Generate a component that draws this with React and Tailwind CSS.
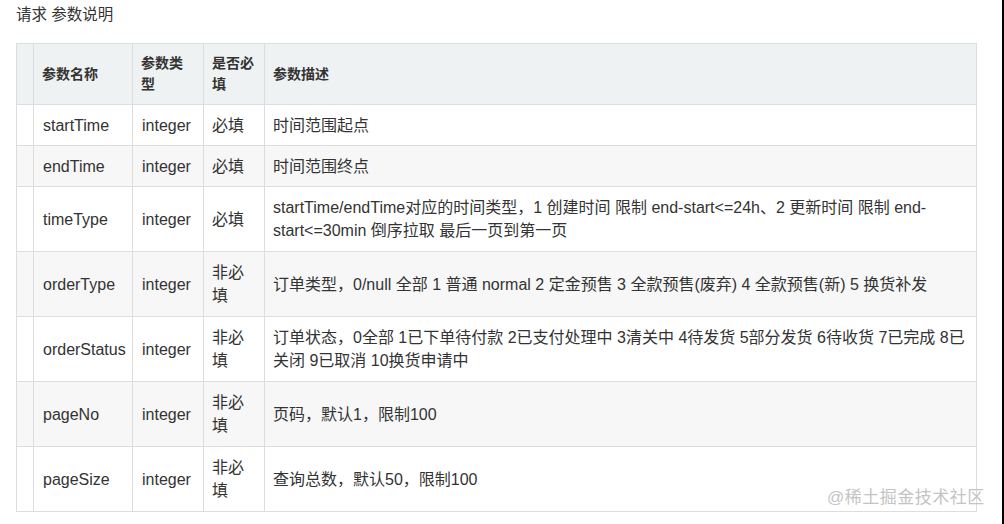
import React from 'react';

const rows = [
  { name: 'startTime', type: 'integer', req: '必填', desc: '时间范围起点' },
  { name: 'endTime', type: 'integer', req: '必填', desc: '时间范围终点' },
  {
    name: 'timeType',
    type: 'integer',
    req: '必填',
    desc: 'startTime/endTime对应的时间类型，1 创建时间 限制 end-start<=24h、2 更新时间 限制 end-start<=30min 倒序拉取 最后一页到第一页',
  },
  {
    name: 'orderType',
    type: 'integer',
    req: '非必填',
    desc: '订单类型，0/null 全部 1 普通 normal 2 定金预售 3 全款预售(废弃) 4 全款预售(新) 5 换货补发',
  },
  {
    name: 'orderStatus',
    type: 'integer',
    req: '非必填',
    desc: '订单状态，0全部 1已下单待付款 2已支付处理中 3清关中 4待发货 5部分发货 6待收货 7已完成 8已关闭 9已取消 10换货申请中',
  },
  { name: 'pageNo', type: 'integer', req: '非必填', desc: '页码，默认1，限制100' },
  { name: 'pageSize', type: 'integer', req: '非必填', desc: '查询总数，默认50，限制100' },
];

const font = { fontFamily: '"Liberation Sans", "Noto Sans CJK SC", sans-serif' };

export default function App() {
  return (
    <div
      className="relative w-[1004px] h-[524px] overflow-hidden bg-white border-r-2 border-black text-[#333]"
      style={font}
    >
      <div className="pl-4 pt-[5px] text-[15.5px] leading-[20px]">请求 参数说明</div>

      <table className="ml-4 mt-[18px] w-[961px] table-fixed border-collapse">
        <colgroup>
          <col className="w-[17px]" />
          <col className="w-[99px]" />
          <col className="w-[71px]" />
          <col className="w-[61px]" />
          <col />
        </colgroup>
        <thead>
          <tr className="bg-[#eff2f2] h-[61px]">
            <th className="border border-[#dddddd]"></th>
            {['参数名称', '参数类型', '是否必填', '参数描述'].map((h) => (
              <th
                key={h}
                className="border border-[#dddddd] pl-[8px] pr-2 text-left align-middle text-[14px] leading-[21px] font-bold text-[#333]"
              >
                {h}
              </th>
            ))}
          </tr>
        </thead>
        <tbody>
          {rows.map((r, i) => (
            <tr
              key={r.name}
              className={
                (i % 2 === 1 ? 'bg-[#f7f7f7] ' : 'bg-white ') +
                (r.desc.length > 50 || r.req.length > 2 ? 'h-[65px]' : 'h-[41px]')
              }
            >
              <td className="border border-[#dddddd]"></td>
              <td className="border border-[#dddddd] pl-[9px] pr-2 text-[16px] leading-[23px] align-middle">
                {r.name}
              </td>
              <td className="border border-[#dddddd] pl-[9px] pr-2 text-[16px] leading-[23px] align-middle">
                {r.type}
              </td>
              <td className="border border-[#dddddd] pl-[8px] pr-2 text-[16px] leading-[23px] align-middle">
                {r.req}
              </td>
              <td className="border border-[#dddddd] pl-[8px] pr-2 text-[16px] leading-[23px] align-middle">
                {r.desc}
              </td>
            </tr>
          ))}
        </tbody>
      </table>

      <div className="absolute left-[827px] top-[487px] text-[17px] leading-[22px] text-[#c4c4c4] tracking-[0.5px]">
        @稀土掘金技术社区
      </div>
    </div>
  );
}
